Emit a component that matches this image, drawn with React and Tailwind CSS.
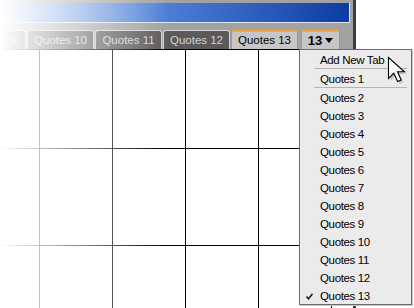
import React from "react";

const font = "font-['Liberation_Sans',Arial,sans-serif]";

function Tab({ label, active, wide, bold }) {
  const base =
    "h-[19px] shrink-0 rounded-t-[3px] border border-b-0 flex items-center justify-center leading-none";
  const w = wide ? "w-[39px]" : "w-[67px]";
  const look = active
    ? "bg-[#c6c6c6] border-[#9a9a9a] border-t-2 border-t-[#f3a83a] text-black"
    : "bg-[#5a5a5a] border-[#d4d4d4] text-[#d2d2d2]";
  return (
    <div className={`${base} ${w} ${look}`}>
      {bold ? (
        <span className="flex items-center gap-[3px] text-[13px] font-bold">
          13
          <svg width="8" height="5" viewBox="0 0 8 5">
            <path d="M0 0 L8 0 L4 5 Z" fill="#000" />
          </svg>
        </span>
      ) : (
        <span className="text-[11.5px] pt-px">{label}</span>
      )}
    </div>
  );
}

function MenuItem({ label, checked }) {
  return (
    <div className="relative h-[18px] flex items-center pl-[20px] pt-[3px] text-[11.5px] tracking-[-0.35px] text-black leading-none">
      {checked && (
        <svg
          className="absolute left-[6px] top-[7px]"
          width="7"
          height="7"
          viewBox="0 0 7 7"
        >
          <path d="M0.5 3.5 L2.5 5.8 L6.5 0.8" stroke="#222" strokeWidth="1.6" fill="none" />
        </svg>
      )}
      {label}
    </div>
  );
}

function Sep() {
  return <div className="h-px bg-[#b4b4b4] ml-[14px] mr-[4px]" />;
}

export default function App() {
  const cols = [0, 1, 2, 3, 4, 5];
  const quotes = Array.from({ length: 12 }, (_, i) => i + 2);
  return (
    <div className={`relative w-[414px] h-[308px] overflow-hidden bg-white ${font}`}>
      {/* window */}
      <div className="w-[356px] h-full flex flex-col bg-[#a2a2a2] border-r-[3px] border-r-[#3a3a48] overflow-hidden">
        <div className="mt-[3px] mr-[3px] h-[20px] shrink-0 border-b border-r border-[#dfe8f8] bg-gradient-to-r from-[#8fb2ea] via-[#4a7cd4] to-[#0d3ba2]" />
        <div className="h-[26px] shrink-0 flex items-end gap-px ml-[-41px]">
          <Tab label="Quotes 9" />
          <Tab label="Quotes 10" />
          <Tab label="Quotes 11" />
          <Tab label="Quotes 12" />
          <Tab label="Quotes 13" active />
          <div className="w-px shrink-0" />
          <Tab wide bold active />
        </div>
        <div className="flex-1 bg-white border-t border-black">
          <div className="flex ml-[-33px]">
            {cols.map((c) => (
              <div key={c} className="w-[73px] h-[99px] shrink-0 border-r border-b border-black" />
            ))}
          </div>
          <div className="flex ml-[-33px]">
            {cols.map((c) => (
              <div key={c} className="w-[73px] h-[97px] shrink-0 border-r border-b border-black" />
            ))}
          </div>
          <div className="flex ml-[-33px]">
            {cols.map((c) => (
              <div key={c} className="w-[73px] h-[97px] shrink-0 border-r border-black" />
            ))}
          </div>
        </div>
      </div>

      {/* white fade over the left side */}
      <div className="pointer-events-none absolute left-0 top-0 h-full w-[168px] bg-gradient-to-r from-white to-white/0" />

      {/* dropdown menu */}
      <div className="absolute left-[299px] top-[49px] w-[113px] border border-[#6a6a6a] bg-[#ebebeb] shadow-[1px_1px_0_#c8c8c8]">
        <MenuItem label="Add New Tab" />
        <Sep />
        <MenuItem label="Quotes 1" />
        <Sep />
        {quotes.map((n) => (
          <MenuItem key={n} label={`Quotes ${n}`} checked={n === 13} />
        ))}
      </div>

      {/* mouse cursor */}
      <svg
        className="absolute left-[387px] top-[56px]"
        width="20"
        height="30"
        viewBox="0 0 20 30"
      >
        <path
          d="M2.5 2.5 L2.5 23.5 L7.8 18.3 L11.6 26.6 L15.2 25 L11.4 16.8 L18.4 16.8 Z"
          fill="#9a9a9a"
          opacity="0.5"
          transform="translate(1.2 1.2)"
        />
        <path
          d="M1.5 1.5 L1.5 22.5 L6.8 17.3 L10.6 25.6 L14.2 24 L10.4 15.8 L17.4 15.8 Z"
          fill="#fff"
          stroke="#000"
          strokeWidth="1.1"
          strokeLinejoin="miter"
        />
      </svg>
    </div>
  );
}
